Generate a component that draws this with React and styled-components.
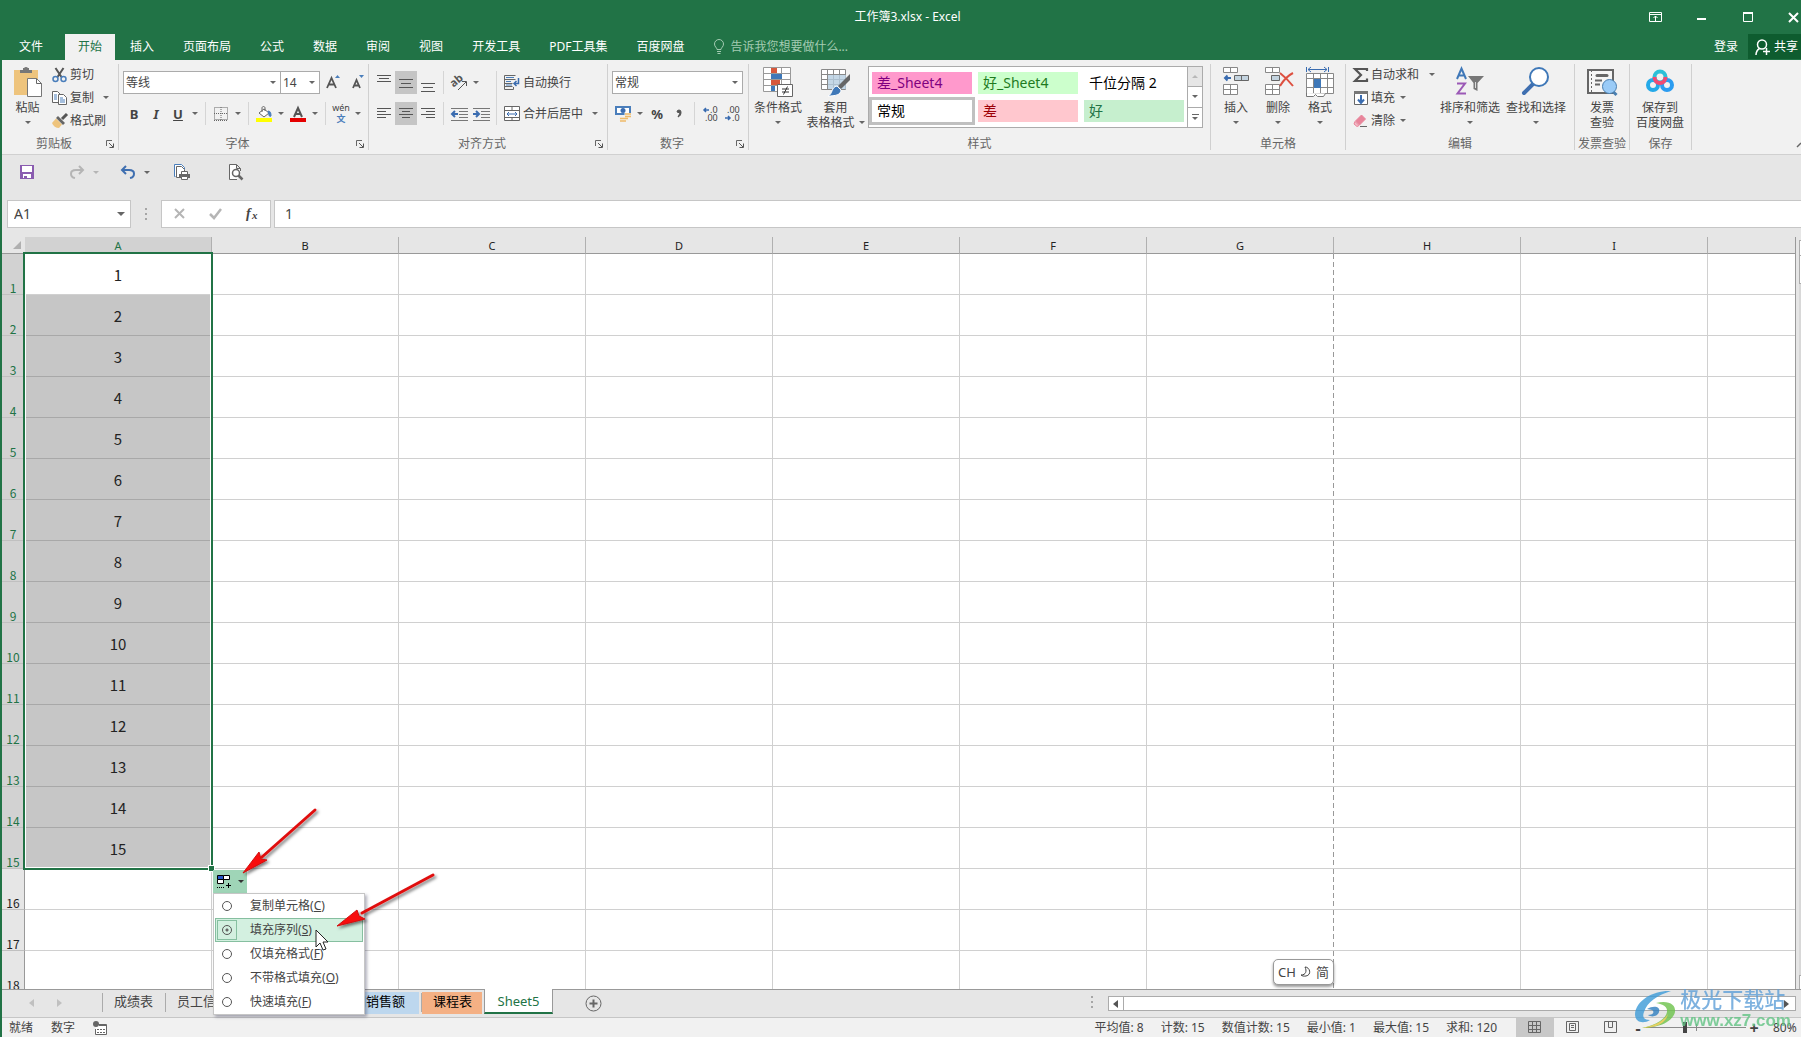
import React, { useState } from 'react'
import styled, { createGlobalStyle, css } from 'styled-components'

const GlobalStyle = createGlobalStyle`
    * { box-sizing: border-box; }
    body { margin: 0; overflow: hidden; }
    body, button, input, select {
        font-family: "Noto Sans", "Noto Sans CJK SC", sans-serif;
        font-size: 12px;
        line-height: 16px;
        color: #444;
    }
    button, input, select { border: 0; padding: 0; margin: 0; background: none; outline: none; }
    svg { display: block; flex: none; overflow: visible; }
`;

const AppFrame = styled.div`
    display: flex;
    flex-direction: column;
    height: 100vh;
    border-left: 2px solid #217346;
    background: #e6e6e6;
    overflow: hidden;
`;

/* ---------- title bar and tabs ---------- */

const TitleBar = styled.header`
    display: flex;
    align-items: center;
    height: 34px;
    background: #217346;
    color: #fff;
`;

const TitleText = styled.h1`
    flex: 1;
    margin: 0;
    padding-left: 164px;
    font-size: 12px;
    font-weight: 400;
    line-height: 34px;
    text-align: center;
`;

const WindowButtons = styled.div`
    display: flex;
    gap: 32px;
    width: 152px;
`;

const WindowButton = styled.button`
    width: 14px;
    height: 14px;
`;

const TabBar = styled.nav`
    display: flex;
    gap: 1px;
    height: 26px;
    background: #217346;
`;

const RibbonTab = styled.button`
    padding: 0 ${p => (p.$active ? 13 : 14)}px;
    line-height: 24px;
    white-space: nowrap;
    background: ${p => (p.$active ? '#f1f1f1' : 'transparent')};
    color: ${p => (p.$active ? '#217346' : '#fff')};
`;

const FileTab = styled(RibbonTab)`
    padding: 0 21px 0 17px;
`;

const TellMe = styled.label`
    display: flex;
    align-items: center;
    gap: 5px;
    flex: 1;
    padding-left: 14px;
    input {
        width: 160px;
        color: #a3cbb2;
    }
    input::placeholder { color: #a3cbb2; opacity: 1; }
`;

const SignIn = styled.button`
    padding: 0 9px;
    line-height: 24px;
    color: #fff;
`;

const ShareButton = styled.button`
    display: flex;
    align-items: center;
    gap: 4px;
    width: 53px;
    height: 25px;
    padding-left: 7px;
    background: #0e5c2f;
    color: #fff;
    white-space: nowrap;
    overflow: hidden;
`;

/* ---------- ribbon ---------- */

const Ribbon = styled.section`
    display: flex;
    flex: none;
    height: 95px;
    padding: 4px 0;
    background: #f1f1f1;
    border-bottom: 1px solid #d0d0d0;
`;

const Group = styled.div`
    display: flex;
    flex-direction: column;
    flex: none;
    width: ${p => p.$width}px;
    border-right: 1px solid #d0d0d0;
`;

const GroupBody = styled.div`
    display: flex;
    flex: 1;
    padding: 0 ${p => p.$pad || 4}px;
`;

const GroupFooter = styled.div`
    display: flex;
    align-items: center;
    height: 13px;
    line-height: 13px;
    color: #666;
    span { flex: 1; text-align: center; white-space: nowrap; }
`;

const Launcher = styled.button`
    width: 12px;
    height: 8px;
`;

const Caret = styled.i`
    flex: none;
    width: 0;
    height: 0;
    border: 3px solid transparent;
    border-top-color: ${p => p.$color || '#666'};
    border-bottom: 0;
`;

const Stack = styled.div`
    display: flex;
    flex-direction: column;
    gap: ${p => p.$gap || 8}px;
    padding-top: ${p => p.$top || 0}px;
`;

const Row = styled.div`
    display: flex;
    align-items: center;
    height: 23px;
`;

const ToolButton = styled.button`
    display: flex;
    flex: none;
    align-items: center;
    justify-content: center;
    width: ${p => p.$width || 22}px;
    height: 23px;
    background: ${p => (p.$on ? '#c5c5c5' : 'transparent')};
    ${p => p.$letter && css`
        font-size: 13px;
        font-weight: 700;
        font-style: ${p.$italic ? 'italic' : 'normal'};
        text-decoration: ${p.$underline ? 'underline' : 'none'};
    `}
`;

const Divider = styled.i`
    flex: none;
    width: 1px;
    height: ${p => p.$height || 23}px;
    margin: 0 ${p => p.$space || 4}px;
    background: #d5d5d5;
`;

const SmallButton = styled.button`
    display: flex;
    align-items: center;
    gap: ${p => p.$gap || 3}px;
    height: ${p => p.$height || 21}px;
    padding-left: 3px;
    white-space: nowrap;
    i { margin-left: ${p => p.$caretGap || 2}px; }
`;

const BigButton = styled.button`
    display: flex;
    flex-direction: column;
    align-items: center;
    flex: none;
    width: ${p => p.$width}px;
    padding-top: 3px;
    line-height: 15px;
    white-space: nowrap;
    svg { margin-bottom: 3px; }
    > i { margin-top: 6px; }
`;

const CaretLine = styled.span`
    display: flex;
    align-items: center;
    gap: 4px;
`;

const Combo = styled.label`
    display: flex;
    align-items: center;
    width: ${p => p.$width}px;
    height: 23px;
    margin-right: -1px;
    padding: 0 4px 0 2px;
    background: #fff;
    border: 1px solid #ababab;
    select {
        appearance: none;
        flex: 1;
        min-width: 0;
        line-height: 20px;
    }
`;

const Gallery = styled.div`
    display: flex;
    width: 335px;
    height: 62px;
    margin-top: 2px;
    background: #fff;
    border: 1px solid #ababab;
`;

const GalleryGrid = styled.div`
    display: grid;
    flex: 1;
    grid-template-columns: repeat(3, 100px);
    grid-auto-rows: 22px;
    gap: 6px;
    padding: 5px 3px;
`;

const StyleCell = styled.button`
    padding-left: 5px;
    text-align: left;
    font-size: 14px;
    line-height: 20px;
    background: ${p => p.$bg || '#fff'};
    color: ${p => p.$color || '#000'};
    box-shadow: ${p => (p.$selected ? '0 0 0 3px #c0c0c0' : 'none')};
`;

const GalleryScroll = styled.div`
    display: flex;
    flex-direction: column;
    width: 15px;
    border-left: 1px solid #ababab;
    button {
        display: flex;
        flex: 1;
        flex-direction: column;
        align-items: center;
        justify-content: center;
        gap: 2px;
    }
    button + button { border-top: 1px solid #ababab; }
    button:first-child { background: #e6e6e6; }
`;

const RibbonEnd = styled.div`
    display: flex;
    flex: 1;
    align-items: flex-end;
    justify-content: flex-end;
    overflow: hidden;
`;

/* ---------- quick access and formula bar ---------- */

const QuickAccess = styled.div`
    display: flex;
    align-items: center;
    flex: none;
    height: 34px;
    padding-left: 17px;
`;

const QuickButton = styled.button`
    display: flex;
    align-items: center;
    gap: 8px;
    width: ${p => p.$width}px;
`;

const FormulaBar = styled.div`
    display: flex;
    align-items: center;
    flex: none;
    height: 48px;
    padding: 2px 0 0 5px;
`;

const Field = styled.label`
    display: flex;
    align-items: center;
    height: 28px;
    padding: 0 5px 0 6px;
    background: #fff;
    border: 1px solid #c6c6c6;
    width: ${p => (p.$grow ? 'auto' : '124px')};
    flex: ${p => (p.$grow ? 1 : 'none')};
    ${p => p.$grow && css`
        margin-left: 3px;
        padding-left: 10px;
        border-right: 0;
    `}
    input {
        flex: 1;
        min-width: 0;
        font-size: 14px;
    }
    i {
        border-width: 4px;
        border-bottom: 0;
    }
`;

const Dots = styled.i`
    display: flex;
    flex-direction: column;
    align-items: center;
    gap: 3px;
    width: ${p => p.$width}px;
    &::before, &::after, & > b {
        content: '';
        width: 2px;
        height: 2px;
        background: #a6a6a6;
    }
`;

const EntryButtons = styled.div`
    display: flex;
    align-items: center;
    justify-content: space-around;
    width: 110px;
    height: 28px;
    background: #fff;
    border: 1px solid #c6c6c6;
`;

/* ---------- sheet ---------- */

const Workspace = styled.main`
    position: relative;
    display: flex;
    flex: 1;
    min-height: 0;
`;

const GridClip = styled.div`
    flex: 1;
    min-width: 0;
    overflow: hidden;
`;

const Grid = styled.table`
    width: 100%;
    table-layout: fixed;
    border-spacing: 0;
    border-right: 1px solid #999;
    th, td { padding: 0; font-weight: 400; }
`;

const CornerCell = styled.th`
    height: 17px;
    border-bottom: 1px solid #999;
    svg { margin-left: 11px; }
`;

const ColHead = styled.th`
    height: 17px;
    font-size: 11px;
    line-height: 14px;
    vertical-align: bottom;
    border-right: 1px solid #b0b0b0;
    border-bottom: 1px solid #999;
    background: ${p => (p.$selected ? '#d2d2d2' : '#e6e6e6')};
    color: ${p => (p.$selected ? '#217346' : '#222')};
    &:last-child { border-right: 0; }
`;

const RowHead = styled.th`
    height: 41px;
    font-family: "Noto Sans CJK SC", sans-serif;
    font-size: 12px;
    line-height: 13px;
    vertical-align: bottom;
    border-right: 1px solid #999;
    border-bottom: 1px solid #c0c0c0;
    background: ${p => (p.$selected ? '#d2d2d2' : '#e6e6e6')};
    color: ${p => (p.$selected ? '#217346' : '#222')};
`;

const Cell = styled.td`
    height: 41px;
    && { padding-top: 2px; }
    font-family: "Noto Sans CJK SC", sans-serif;
    font-size: 15px;
    line-height: 20px;
    text-align: center;
    vertical-align: middle;
    color: #222;
    background: ${p => (p.$filled ? '#c6c6c6' : '#fff')};
    border-right: 1px solid #d0d0d0;
    border-bottom: 1px solid ${p => (p.$filled ? '#a8a8a8' : '#d0d0d0')};
    ${p => p.$pageBreak && css`
        border-right: 0;
        background: repeating-linear-gradient(#999 0 5px, #fff 5px 8px) right / 1px 100% no-repeat #fff;
    `}
    &:last-child { border-right: 0; }
`;

const Selection = styled.div`
    position: absolute;
    left: 21px;
    top: 15px;
    width: 190px;
    height: 618px;
    border: 2px solid #217346;
    box-shadow: inset 0 0 0 1px #fff;
    &::after {
        content: '';
        position: absolute;
        right: -3px;
        bottom: -3px;
        width: 5px;
        height: 5px;
        background: #217346;
        outline: 1px solid #fff;
    }
`;

const SideScroll = styled.div`
    display: flex;
    flex-direction: column;
    width: 5px;
    padding: 3px 0 0 3px;
    i { border-left: 1px solid #ababab; border-top: 1px solid #ababab; background: #fff; }
    i:nth-child(1) { height: 15px; }
    i:nth-child(2) { height: 29px; border-bottom: 1px solid #ababab; }
    i:nth-child(3) { flex: 1; border: 0; background: #d8d8d8; }
    i:nth-child(4) { height: 14px; }
`;

const FillOptions = styled.div`
    position: absolute;
    z-index: 2;
    left: 211px;
    top: 633px;
`;

const FillButton = styled.button`
    display: flex;
    align-items: center;
    gap: 6px;
    width: 34px;
    height: 23px;
    padding-left: 4px;
    background: #9fd5b7;
`;

const Menu = styled.div`
    width: 152px;
    padding: 0 1px;
    background: #fff;
    border: 1px solid #c6c6c6;
    box-shadow: 2px 2px 3px rgba(60, 60, 90, 0.4);
`;

const MenuItem = styled.label`
    display: flex;
    align-items: center;
    gap: 13px;
    height: 24px;
    border: 1px solid ${p => (p.$active ? '#86bfa0' : 'transparent')};
    background: ${p => (p.$active ? '#d3f0e0' : 'transparent')};
    white-space: nowrap;
`;

const RadioBox = styled.span`
    display: flex;
    align-items: center;
    justify-content: center;
    width: 20px;
    height: 20px;
    margin-left: 1px;
    border: 1px solid ${p => (p.$active ? '#86bfa0' : 'transparent')};
    input {
        appearance: none;
        width: 10px;
        height: 10px;
        border: 1px solid #555;
        border-radius: 50%;
        background: ${p => (p.$active ? 'radial-gradient(#666 1px, transparent 2px)' : '#fff')};
    }
`;

const Annotations = styled.svg`
    position: absolute;
    z-index: 3;
    left: 210px;
    top: 563px;
    pointer-events: none;
`;

const ImeBadge = styled.div`
    position: absolute;
    right: 467px;
    bottom: 4px;
    display: flex;
    align-items: center;
    justify-content: center;
    gap: 4px;
    width: 61px;
    height: 26px;
    background: #fff;
    border: 1px solid #999;
    border-radius: 5px;
    box-shadow: 0 2px 3px rgba(0, 0, 0, 0.4);
    font-size: 13px;
`;

/* ---------- sheet tabs and status bar ---------- */

const SheetBar = styled.div`
    display: flex;
    flex: none;
    height: 28px;
    border-top: 1px solid #999;
`;

const SheetNav = styled.div`
    display: flex;
    align-items: center;
    gap: 23px;
    width: 100px;
    height: 26px;
    padding-left: 27px;
`;

const SheetTab = styled.button`
    flex: none;
    width: ${p => p.$width}px;
    height: 22px;
    margin: 2px 2px 0 0;
    padding: 0 0 4px 11px;
    text-align: left;
    font-size: 13px;
    line-height: 18px;
    white-space: nowrap;
    background: ${p => p.$bg || 'transparent'};
    color: ${p => (p.$bg ? '#000' : '#444')};
    ${p => p.$active && css`
        height: 25px;
        margin: -1px 0 0;
        padding: 1px 0 0;
        text-align: center;
        background: #fff;
        color: #217346;
        border: 1px solid #999;
        border-top: 0;
        border-bottom: 2px solid #217346;
    `}
`;

const TabDivider = styled.i`
    width: 1px;
    height: 19px;
    margin-top: 3px;
    background: #ababab;
`;

const AddSheet = styled.button`
    width: 17px;
    height: 26px;
    margin-left: 32px;
`;

const SheetSpacer = styled.div`
    flex: 1;
`;

const HScroll = styled.div`
    display: flex;
    align-items: center;
    justify-content: space-between;
    width: 688px;
    height: 15px;
    margin: 6px 5px 0 0;
    background: #fff;
    border: 1px solid #ababab;
    button {
        width: 15px;
        height: 13px;
        padding-left: 4px;
        border-right: 1px solid #ababab;
    }
    button:last-child { border: 0; }
`;

const StatusBar = styled.footer`
    display: flex;
    align-items: center;
    flex: none;
    height: 20px;
    padding-left: 7px;
    background: #f1f1f1;
    border-top: 1px solid #c6c6c6;
    white-space: nowrap;
`;

const StatusLeft = styled.div`
    display: flex;
    align-items: center;
    gap: 18px;
    flex: 1;
`;

const StatusSums = styled.div`
    display: flex;
    gap: 17px;
    padding-right: 19px;
`;

const ViewButton = styled.button`
    display: flex;
    align-items: center;
    justify-content: center;
    width: 38px;
    height: 19px;
    background: ${p => (p.$on ? '#c8c8c8' : 'transparent')};
`;

const ZoomControl = styled.div`
    display: flex;
    align-items: center;
    width: 171px;
    padding-left: 3px;
    button { width: 10px; font-size: 16px; font-weight: 700; line-height: 16px; }
    label { padding-left: 14px; }
`;

const ZoomSlider = styled.input`
    appearance: none;
    width: 100px;
    height: 16px;
    margin: 0 3px;
    background: linear-gradient(#8a8a8a, #8a8a8a) center / 100% 1px no-repeat,
        linear-gradient(#8a8a8a, #8a8a8a) center / 1px 7px no-repeat;
    &::-webkit-slider-thumb {
        appearance: none;
        width: 4px;
        height: 11px;
        background: #444;
    }
`;

const Watermark = styled.div`
    position: fixed;
    z-index: 4;
    right: 10px;
    bottom: 5px;
    display: flex;
    align-items: center;
    gap: 4px;
    pointer-events: none;
    opacity: 0.8;
`;

const WatermarkText = styled.div`
    display: flex;
    flex-direction: column;
    font-size: 21px;
    line-height: 22px;
    font-weight: 500;
    color: #5e9fd8;
    b {
        font-family: "Liberation Sans", sans-serif;
        font-size: 17px;
        line-height: 22px;
        font-weight: 700;
        color: #62c384;
    }
`;

/* ---------- icons ---------- */

const Icon = ({ w = 16, h = 16, children, ...rest }) => (
    <svg width={w} height={h} viewBox={`0 0 ${w} ${h}`} fill="none" stroke="#666" {...rest}>
        {children}
    </svg>
)

const PasteIcon = () => (
    <Icon w={28} h={30}>
        <path d="M0 3h24v25H0z" fill="#eec47d" stroke="none" />
        <path d="M6 6h12V3h-3V1h-1c-1-1.500-3-1.500-4 0H9v2H6z" fill="#777" stroke="none" />
        <path d="M13.500 11.500h9l5 5v13h-14z" fill="#fff" stroke="#777" />
        <path d="M22.500 11.500v5h5" />
    </Icon>
)

const ScissorsIcon = () => (
    <Icon w={15}>
        <path d="M3.500 1l6 9M11.500 1l-6 9" stroke="#555" strokeWidth="2" />
        <circle cx="3.500" cy="12" r="2.500" stroke="#4a7ebb" strokeWidth="1.500" />
        <circle cx="11.500" cy="12" r="2.500" stroke="#4a7ebb" strokeWidth="1.500" />
    </Icon>
)

const CopyIcon = () => (
    <Icon w={15}>
        <path d="M.5 1.500h5l3 3v8h-8z" fill="#fff" />
        <path d="M2 5h3M2 7h3M2 9h3" stroke="#4a7ebb" />
        <path d="M6.500 4.500h5l3 3v7h-8z" fill="#fff" />
        <path d="M8 8h3M8 10h5M8 12h5" stroke="#4a7ebb" />
    </Icon>
)

const BrushIcon = () => (
    <Icon w={15}>
        <path d="M15 1l-5 5" stroke="#555" strokeWidth="3" />
        <path d="M6 3l7 7-2 2-7-7z" fill="#666" stroke="none" />
        <path d="M4 5.500l6 6-3 3.500c-3 0-6-2-7-5z" fill="#eec47d" stroke="none" />
    </Icon>
)

const LauncherIcon = () => (
    <Icon w={8} h={8}>
        <path d="M.5 6V.5H6" />
        <path d="M3 3l4 4M7.500 3.500v4h-4" stroke="#555" />
    </Icon>
)

const GrowFontIcon = ({ down }) => (
    <Icon w={15} h={18}>
        <path
            d={down ? 'M2 14L5.500 6 9 14M3 11.500h5' : 'M1 14L5.500 4 10 14M2.500 10.500h6'}
            stroke="#555"
            strokeWidth="1.800"
        />
        <path d={down ? 'M8 1h5l-2.500 3z' : 'M9 4h5l-2.500-3z'} fill="#4a7ebb" stroke="none" />
    </Icon>
)

const BordersIcon = () => (
    <Icon w={14} h={14}>
        <path d="M.5.5h13v12H.5zM7 0v13M0 6.500h14" strokeDasharray="1 1" />
        <path d="M0 13.500h14" strokeDasharray="1 1" />
    </Icon>
)

const FillColorIcon = () => (
    <Icon>
        <path d="M3 7l5-4 5 4-5 4z" fill="#fff" />
        <path d="M6 6V2c0-2 3-2 3 0v3" />
        <path d="M12 5c3 0 3 3 3 5-1 1-2 0-2-1z" fill="#4a7ebb" stroke="#4a7ebb" />
        <path d="M0 12h16v4H0z" fill="#ff0" stroke="none" />
    </Icon>
)

const FontColorIcon = () => (
    <Icon>
        <path d="M4 11L8 2l4 9M5 8h6" stroke="#555" strokeWidth="2" />
        <path d="M0 12h16v4H0z" fill="#e50000" stroke="none" />
    </Icon>
)

const Phonetic = styled.span`
    display: flex;
    flex-direction: column;
    font-size: 9px;
    line-height: 10px;
    b { font-size: 9px; line-height: 12px; color: #4a7ebb; }
`;

// lines are [x, width] pairs drawn every three pixels
const LinesIcon = ({ lines, top, step = 4 }) => (
    <Icon w={14} h={20}>
        {lines.map(([x, w], i) => (
            <path key={i} d={`M${x} ${top + i * step + 0.5}h${w}`} stroke="#555" />
        ))}
    </Icon>
)

const IndentIcon = ({ out }) => (
    <Icon w={17} h={14}>
        <path d="M0 1.500h17M8 4.500h9M8 7.500h9M8 10.500h9M0 13.500h17" stroke="#777" />
        <path
            d={out ? 'M7 7H2M4 4L1 7l3 3' : 'M0 7h5M3 4l3 3-3 3'}
            stroke="#3a6cb0"
            strokeWidth="2"
        />
    </Icon>
)

const AngleIcon = () => (
    <Icon w={17}>
        <text x="0" y="10" fontSize="11" fontWeight="700" fill="#555" stroke="none" transform="rotate(-40 5 8)">ab</text>
        <path d="M7 15l8-8M11 6.500h4.500v4.500" stroke="#555" />
    </Icon>
)

const WrapIcon = () => (
    <Icon>
        <path d="M.5.5h11M.5 4.500h11M.5.5v14M9.500 12v2.500h-9M.5 8.500h8M.5 11.500h8" />
        <path d="M2 2.500h8M2 6.500h5M2 10h6" stroke="#4a7ebb" />
        <path d="M14.500 3v5.500h-4M12.500 6l-2.500 2.500 2.500 2.500" stroke="#3a6cb0" strokeWidth="1.500" />
    </Icon>
)

const MergeIcon = () => (
    <Icon>
        <path d="M.5.5h15v14H.5zM.5 4.500h15M.5 11.500h15M8 .5v4M8 11.500v3" fill="#fff" />
        <path d="M3 8h10M5 6L3 8l2 2M11 6l2 2-2 2" stroke="#3a6cb0" />
    </Icon>
)

const CurrencyIcon = () => (
    <Icon>
        <path d="M0 0h16v9H0z" fill="#4a7ebb" stroke="none" />
        <path d="M2 2h12v5H2z" fill="#fff" stroke="none" />
        <circle cx="8" cy="4.500" r="2.500" fill="#3a6cb0" stroke="none" />
        <path d="M9.500 7h6.500v4h-2v4H4.500v-4h5z" fill="#f4f0e6" stroke="none" />
        <path d="M10 8h6M10 10.500h6M5 12.500h8M5 15h6" stroke="#eeb96a" strokeWidth="1.500" />
    </Icon>
)

const DecimalIcon = ({ more }) => (
    <Icon w={17} h={16} fill="#444">
        <text x={more ? 8 : 3} y="7" fontSize="9" stroke="none">{more ? '.0' : '.00'}</text>
        <text x={more ? 3 : 8} y="15" fontSize="9" stroke="none">{more ? '.00' : '.0'}</text>
        <path d={more ? 'M7 4H2M4 2L2 4l2 2' : 'M1 12h5M4 10l2 2-2 2'} stroke="#3a6cb0" strokeWidth="1.500" />
    </Icon>
)

const ConditionalIcon = () => (
    <Icon w={30} h={30}>
        <path d="M.5.5h27v24H.5zM.5 6.500h27M.5 12.500h27M.5 18.500h27M8.500.5v24M18.500.5v24" fill="#fff" stroke="#999" />
        <path d="M8 1h6v5H8zM8 13h9v5H8z" fill="#d6583c" stroke="none" />
        <path d="M8 7h11v5H8zM8 19h4v5H8z" fill="#3f78b8" stroke="none" />
        <path d="M14.500 17.500h15v12h-15z" fill="#fff" />
        <path d="M19 22h7M19 25h7M24.500 19.500l-4 8" stroke="#333" />
    </Icon>
)

const TableFormatIcon = () => (
    <Icon w={30} h={30}>
        <path d="M.5 2.500h24v20H.5zM.5 7.500h24M.5 12.500h24M.5 17.500h24M6.500 2.500v20M12.500 2.500v20M18.500 2.500v20" fill="#fff" stroke="#888" />
        <path d="M7 8h18v14H7z" fill="#b5cde0" fillOpacity=".8" stroke="none" />
        <path d="M29 7v6l-9 9-3-3z" fill="#666" stroke="none" />
        <path d="M16 19l4 4c0 5-6 6-13 6 5-2 3-9 9-10z" fill="#3f78b8" stroke="#fff" />
    </Icon>
)

const CellsIcon = ({ kind }) => (
    <Icon w={26} h={30}>
        <path d="M.5.5h14v5H.5zM7.500.5v5M.5 17.500h14v10H.5zM7.500 17.500v10M.5 22.500h14" fill="#fff" stroke="#888" />
        {kind === 'insert' ? (
            <>
                <path d="M11.500 8.500h14v5h-14zM18.500 8.500v5" fill="#c3d3df" />
                <path d="M8 11H2M4.500 8.500L2 11l2.500 2.500" stroke="#3a6cb0" strokeWidth="2" />
            </>
        ) : (
            <>
                <path d="M6.500 8.500h8v5h-8z" fill="#c3d3df" />
                <path d="M15 6c5 4 9 8 13 13M28 6c-6 3-10 8-13 13" stroke="#dd5040" strokeWidth="2" />
            </>
        )}
    </Icon>
)

const CellFormatIcon = () => (
    <Icon w={30} h={30}>
        <path d="M1.500 0v5M23.500 0v5M3 2.500h19M6 0L3 2.500 6 5M19 0l3 2.500L19 5" stroke="#3a6cb0" />
        <path d="M1.500 6.500h27v20H1.500zM1.500 11.500h27M1.500 20.500h27M8.500 6.500v20M15.500 6.500v20M22.500 6.500v20" fill="#fff" stroke="#888" />
        <path d="M9 12h7v9H9z" fill="#3f78b8" stroke="none" />
        <path d="M1.500 26v3.500h7l2-2 2 2h6l2-3" fill="#fff" stroke="#777" />
    </Icon>
)

const SumIcon = () => (
    <Icon w={15}>
        <path d="M14 4V2H2l6 6-6 6h12v-2.500" stroke="#555" strokeWidth="2.200" />
    </Icon>
)

const FillDownIcon = () => (
    <Icon w={15}>
        <path d="M1.500 1.500h13v13h-13z" fill="#fff" />
        <path d="M1 1h14v3H1z" fill="#777" stroke="none" />
        <path d="M8 5v8M5 9.500L8 13l3-3.500" stroke="#3a6cb0" strokeWidth="2" />
    </Icon>
)

const EraserIcon = () => (
    <Icon w={15}>
        <path d="M8.500 2l4 4-6 6-4-4z" fill="#e8849a" stroke="#e8849a" strokeLinejoin="round" />
        <path d="M2 8.500L6 12.500l-2 1L1 11z" fill="#f4bcc8" stroke="#e8849a" />
        <path d="M7 13.500h7" />
    </Icon>
)

const SortIcon = () => (
    <Icon w={30} h={30}>
        <path d="M2 12L6.500 1.500 11 12M3.500 8.500h6" stroke="#3f78b8" strokeWidth="2" />
        <path d="M2 16.500h8L2.500 26.500h8.500" stroke="#9b59b6" strokeWidth="2" />
        <path d="M13 9h16l-6.500 7v8l-4-2v-6z" fill="#777" stroke="none" />
        <path d="M20.500 15v6" stroke="#ddd" />
    </Icon>
)

const FindIcon = () => (
    <Icon w={30} h={30}>
        <path d="M3 26l10-10" stroke="#3f6fb0" strokeWidth="4" strokeLinecap="round" />
        <circle cx="18" cy="10" r="9" fill="#fff" stroke="#3f78b8" strokeWidth="2" />
    </Icon>
)

const InvoiceIcon = () => (
    <Icon w={30} h={30}>
        <path d="M1 3h25v23H1z" fill="#f5f5f5" strokeWidth="2" />
        <path d="M4.500 3v23" strokeDasharray="2 2" />
        <path d="M10 8.500h10" strokeWidth="3" strokeLinecap="round" />
        <path d="M8 13.500h7M8 17.500h5" strokeWidth="2" />
        <circle cx="22.500" cy="19.500" r="7" fill="#9acbf7" stroke="#4a7fb0" />
        <path d="M26.500 25l3 3" stroke="#4a7fb0" strokeWidth="3" />
    </Icon>
)

const NetdiskIcon = () => (
    <Icon w={30} h={30}>
        <circle cx="8" cy="18" r="5" stroke="#24a9e8" strokeWidth="4" />
        <circle cx="22" cy="18" r="5" stroke="#2b9cf0" strokeWidth="4" />
        <circle cx="15" cy="10" r="5.500" stroke="#2cc0d8" strokeWidth="4" />
        <path d="M9.500 10c0 8 11 8 11 0" stroke="#ef4b73" strokeWidth="4" />
    </Icon>
)

/* ---------- data ---------- */

const TABS = ['插入', '页面布局', '公式', '数据', '审阅', '视图', '开发工具', 'PDF工具集', '百度网盘']

const CELL_STYLES = [
    { name: '差_Sheet4', bg: '#ff99cc', color: '#800080' },
    { name: '好_Sheet4', bg: '#ccffcc', color: '#1e7b1e' },
    { name: '千位分隔 2' },
    { name: '常规', selected: true },
    { name: '差', bg: '#ffc7ce', color: '#9c0006' },
    { name: '好', bg: '#c6efce', color: '#217346' },
]

const COLUMNS = ['A', 'B', 'C', 'D', 'E', 'F', 'G', 'H', 'I', '']
const ROWS = Array.from({ length: 18 }, (_, i) => i + 1)
const LAST_FILLED = 15

const FILL_CHOICES = [
    { label: '复制单元格', keyName: 'C' },
    { label: '填充序列', keyName: 'S' },
    { label: '仅填充格式', keyName: 'F' },
    { label: '不带格式填充', keyName: 'O' },
    { label: '快速填充', keyName: 'F' },
]

const SUMS = ['平均值: 8', '计数: 15', '数值计数: 15', '最小值: 1', '最大值: 15', '求和: 120']

const FULL = [0, 14]

/* ---------- components ---------- */

function RibbonGroup({ label, width, pad, launcher, children }) {
    return (
        <Group $width={width}>
            <GroupBody $pad={pad}>{children}</GroupBody>
            <GroupFooter>
                <span>{label}</span>
                {launcher && <Launcher aria-label={`${label}设置`}><LauncherIcon /></Launcher>}
            </GroupFooter>
        </Group>
    )
}

function Header() {
    return (
        <>
            <TitleBar>
                <TitleText>工作簿3.xlsx - Excel</TitleText>
                <WindowButtons>
                    <WindowButton aria-label="功能区显示选项">
                        <Icon w={14} h={14} stroke="#fff">
                            <path d="M.5 2.500h12v9H.5zM.5 4.500h12M6.500 11V6M4.500 8l2-2 2 2" />
                        </Icon>
                    </WindowButton>
                    <WindowButton aria-label="最小化">
                        <Icon w={14} h={14} stroke="#fff"><path d="M2 9h9" strokeWidth="2" /></Icon>
                    </WindowButton>
                    <WindowButton aria-label="最大化">
                        <Icon w={14} h={14} stroke="#fff">
                            <path d="M2.500 2.500h9v9h-9z" /><path d="M2 3h10" strokeWidth="2" />
                        </Icon>
                    </WindowButton>
                    <WindowButton aria-label="关闭">
                        <Icon w={14} h={14} stroke="#fff"><path d="M2 3l9 9M11 3l-9 9" strokeWidth="2" /></Icon>
                    </WindowButton>
                </WindowButtons>
            </TitleBar>
            <TabBar>
                <FileTab>文件</FileTab>
                <RibbonTab $active>开始</RibbonTab>
                {TABS.map(tab => <RibbonTab key={tab}>{tab}</RibbonTab>)}
                <TellMe>
                    <Icon w={12} h={16} stroke="#a3cbb2">
                        <path d="M4 10.500C4 8.500 1.500 8 1.500 5a4.500 4.500 0 0 1 9 0c0 3-2.500 3.500-2.500 5.500zM4 12.500h4M4.500 14.500h3" />
                    </Icon>
                    <input aria-label="告诉我" placeholder="告诉我您想要做什么..." />
                </TellMe>
                <SignIn>登录</SignIn>
                <ShareButton>
                    <Icon w={15} stroke="#fff" strokeWidth="1.500">
                        <circle cx="7" cy="5.500" r="4.500" />
                        <path d="M1 16c0-3 1-5 3.500-6.500M8 12.500h7M11.500 9v7" />
                    </Icon>
                    共享
                </ShareButton>
            </TabBar>
        </>
    )
}

function HomeRibbon() {
    return (
        <Ribbon>
            <RibbonGroup label="剪贴板" width={117} launcher>
                <BigButton $width={43}><PasteIcon />粘贴<Caret /></BigButton>
                <Stack $gap={2}>
                    <SmallButton><ScissorsIcon />剪切</SmallButton>
                    <SmallButton $caretGap={6}><CopyIcon />复制<Caret /></SmallButton>
                    <SmallButton><BrushIcon />格式刷</SmallButton>
                </Stack>
            </RibbonGroup>

            <RibbonGroup label="字体" width={250} launcher>
                <Stack $top={7}>
                    <Row>
                        <Combo $width={158}>
                            <select aria-label="字体"><option>等线</option></select><Caret />
                        </Combo>
                        <Combo $width={40}>
                            <select aria-label="字号"><option>14</option></select><Caret />
                        </Combo>
                        <ToolButton $width={28} aria-label="增大字号"><GrowFontIcon /></ToolButton>
                        <ToolButton aria-label="减小字号"><GrowFontIcon down /></ToolButton>
                    </Row>
                    <Row>
                        <ToolButton $letter>B</ToolButton>
                        <ToolButton $letter $italic>I</ToolButton>
                        <ToolButton $letter $underline>U</ToolButton>
                        <ToolButton $width={12} aria-label="下划线选项"><Caret /></ToolButton>
                        <Divider />
                        <ToolButton aria-label="边框"><BordersIcon /></ToolButton>
                        <ToolButton $width={12} aria-label="边框选项"><Caret /></ToolButton>
                        <Divider />
                        <ToolButton aria-label="填充颜色"><FillColorIcon /></ToolButton>
                        <ToolButton $width={12} aria-label="填充颜色选项"><Caret /></ToolButton>
                        <ToolButton aria-label="字体颜色"><FontColorIcon /></ToolButton>
                        <ToolButton $width={12} aria-label="字体颜色选项"><Caret /></ToolButton>
                        <Divider />
                        <ToolButton aria-label="拼音"><Phonetic>wén<b>文</b></Phonetic></ToolButton>
                        <ToolButton $width={12} aria-label="拼音选项"><Caret /></ToolButton>
                    </Row>
                </Stack>
            </RibbonGroup>

            <RibbonGroup label="对齐方式" width={239} launcher>
                <Stack $top={7}>
                    <Row>
                        <ToolButton aria-label="顶端对齐"><LinesIcon top={2} lines={[FULL, [2, 10], FULL]} step={3} /></ToolButton>
                        <ToolButton $on aria-label="垂直居中"><LinesIcon top={6} lines={[FULL, [2, 10], FULL]} /></ToolButton>
                        <ToolButton aria-label="底端对齐"><LinesIcon top={10} lines={[FULL, [2, 10], FULL]} /></ToolButton>
                        <Divider />
                        <ToolButton aria-label="方向"><AngleIcon /></ToolButton>
                        <ToolButton $width={12} aria-label="方向选项"><Caret /></ToolButton>
                    </Row>
                    <Row>
                        <ToolButton aria-label="左对齐"><LinesIcon top={4} lines={[FULL, [0, 9], FULL, [0, 9]]} step={3} /></ToolButton>
                        <ToolButton $on aria-label="居中"><LinesIcon top={4} lines={[FULL, [3, 8], FULL, [3, 8]]} step={3} /></ToolButton>
                        <ToolButton aria-label="右对齐"><LinesIcon top={4} lines={[FULL, [5, 9], FULL, [5, 9]]} step={3} /></ToolButton>
                        <Divider />
                        <ToolButton aria-label="减少缩进量"><IndentIcon out /></ToolButton>
                        <ToolButton aria-label="增加缩进量"><IndentIcon /></ToolButton>
                    </Row>
                </Stack>
                <Stack $top={7}><Divider $height={54} /></Stack>
                <Stack $top={7}>
                    <SmallButton $height={23}><WrapIcon />自动换行</SmallButton>
                    <SmallButton $height={23} $caretGap={6}><MergeIcon />合并后居中<Caret /></SmallButton>
                </Stack>
            </RibbonGroup>

            <RibbonGroup label="数字" width={141} launcher>
                <Stack $top={7}>
                    <Row>
                        <Combo $width={131}>
                            <select aria-label="数字格式"><option>常规</option></select><Caret />
                        </Combo>
                    </Row>
                    <Row>
                        <ToolButton aria-label="会计数字格式"><CurrencyIcon /></ToolButton>
                        <ToolButton $width={12} aria-label="会计选项"><Caret /></ToolButton>
                        <ToolButton $letter>%</ToolButton>
                        <ToolButton aria-label="千位分隔样式">
                            <Icon w={6} h={10}><path d="M1 3a2 2 0 1 1 4 0c0 3-1 4-3 5l2-4z" fill="#555" stroke="#555" /></Icon>
                        </ToolButton>
                        <Divider />
                        <ToolButton aria-label="增加小数位数"><DecimalIcon more /></ToolButton>
                        <ToolButton aria-label="减少小数位数"><DecimalIcon /></ToolButton>
                    </Row>
                </Stack>
            </RibbonGroup>

            <RibbonGroup label="样式" width={462}>
                <BigButton $width={50}><ConditionalIcon />条件格式<Caret /></BigButton>
                <BigButton $width={65}>
                    <TableFormatIcon />
                    套用
                    <CaretLine>表格格式<Caret /></CaretLine>
                </BigButton>
                <Gallery>
                    <GalleryGrid>
                        {CELL_STYLES.map(s => (
                            <StyleCell key={s.name} $bg={s.bg} $color={s.color} $selected={s.selected}>{s.name}</StyleCell>
                        ))}
                    </GalleryGrid>
                    <GalleryScroll>
                        <button aria-label="上一行"><Icon w={6} h={3}><path d="M0 3h6L3 0z" fill="#b8b8b8" stroke="none" /></Icon></button>
                        <button aria-label="下一行"><Caret /></button>
                        <button aria-label="其他">
                            <Icon w={7} h={1}><path d="M0 .5h7" /></Icon>
                            <Caret />
                        </button>
                    </GalleryScroll>
                </Gallery>
            </RibbonGroup>

            <RibbonGroup label="单元格" width={135}>
                <BigButton $width={42}><CellsIcon kind="insert" />插入<Caret /></BigButton>
                <BigButton $width={42}><CellsIcon kind="delete" />删除<Caret /></BigButton>
                <BigButton $width={42}><CellFormatIcon />格式<Caret /></BigButton>
            </RibbonGroup>

            <RibbonGroup label="编辑" width={229}>
                <Stack $gap={2}>
                    <SmallButton $caretGap={7}><SumIcon />自动求和<Caret /></SmallButton>
                    <SmallButton><FillDownIcon />填充<Caret /></SmallButton>
                    <SmallButton><EraserIcon />清除<Caret /></SmallButton>
                </Stack>
                <BigButton $width={70}><SortIcon />排序和筛选<Caret /></BigButton>
                <BigButton $width={62}><FindIcon />查找和选择<Caret /></BigButton>
            </RibbonGroup>

            <RibbonGroup label="发票查验" width={55}>
                <BigButton $width={46}><InvoiceIcon />发票<span>查验</span></BigButton>
            </RibbonGroup>

            <RibbonGroup label="保存" width={62}>
                <BigButton $width={52}><NetdiskIcon />保存到<span>百度网盘</span></BigButton>
            </RibbonGroup>

            <RibbonEnd>
                <Icon w={4} h={8}><path d="M0 5l4-4" strokeWidth="1.500" /></Icon>
            </RibbonEnd>
        </Ribbon>
    )
}

function Bars() {
    return (
        <>
            <QuickAccess>
                <QuickButton $width={50} aria-label="保存">
                    <Icon w={16}>
                        <path d="M1 1h14v14H1z" fill="#8a5cb0" stroke="none" />
                        <path d="M3 2h10v6H3zM4 10h8v4H4z" fill="#fff" stroke="none" />
                        <path d="M5 12h3v3H5z" fill="#8a5cb0" stroke="none" />
                    </Icon>
                </QuickButton>
                <QuickButton $width={51} aria-label="恢复">
                    <Icon w={16} stroke="#b5b5b5" strokeWidth="2">
                        <path d="M14 6H7c-7 0-6 7-1 8M10 2l4 4-4 4" />
                    </Icon>
                    <Caret $color="#b5b5b5" />
                </QuickButton>
                <QuickButton $width={53} aria-label="撤消">
                    <Icon w={16} stroke="#3f6fb0" strokeWidth="2">
                        <path d="M2 6h7c7 0 6 7 1 8M6 2L2 6l4 4" />
                    </Icon>
                    <Caret />
                </QuickButton>
                <QuickButton $width={55} aria-label="快速打印">
                    <Icon w={17} h={17}>
                        <path d="M2.500 12.500h-1v-12h7l3 3v2" fill="#fff" stroke="#4a7ebb" />
                        <path d="M3.500 2.500h5l3 3v8h-8z" fill="#fff" />
                        <path d="M8.500 7.500h6v3h-6z" fill="#fff" />
                        <path d="M6 10h11v4H6z" fill="#666" stroke="none" />
                        <path d="M8.500 12.500h6v3h-6z" fill="#fff" />
                    </Icon>
                </QuickButton>
                <QuickButton $width={20} aria-label="打印预览">
                    <Icon w={16} h={17}>
                        <path d="M9 15.500H1.500V.5h7l4 4V7M8.500.5v4h4" fill="#fff" />
                        <circle cx="8" cy="9" r="3.500" fill="#fff" strokeWidth="1.500" />
                        <path d="M10.500 11.500l4 4" strokeWidth="2.500" />
                    </Icon>
                </QuickButton>
            </QuickAccess>
            <FormulaBar>
                <Field>
                    <input aria-label="名称框" defaultValue="A1" />
                    <Caret />
                </Field>
                <Dots $width={30}><b /></Dots>
                <EntryButtons>
                    <button aria-label="取消"><Icon w={12} h={12} stroke="#b5b5b5" strokeWidth="2"><path d="M1 1l9 9M10 1l-9 9" /></Icon></button>
                    <button aria-label="输入"><Icon w={13} h={12} stroke="#b5b5b5" strokeWidth="2.500"><path d="M1 6l4 4 7-9" /></Icon></button>
                    <button aria-label="插入函数">
                        <Icon w={14} h={16} fill="#444">
                            <text x="1" y="12" fontSize="14" fontStyle="italic" fontWeight="700" fontFamily="Liberation Serif" stroke="none">f</text>
                            <text x="7" y="13" fontSize="11" fontStyle="italic" fontWeight="700" fontFamily="Liberation Serif" stroke="none">x</text>
                        </Icon>
                    </button>
                </EntryButtons>
                <Field $grow>
                    <input aria-label="编辑栏" defaultValue="1" />
                </Field>
            </FormulaBar>
        </>
    )
}

function FillMenu() {
    const [choice, setChoice] = useState(1)

    return (
        <FillOptions>
            <FillButton aria-label="自动填充选项">
                <Icon w={15} h={15} stroke="#000">
                    <path d="M.5 1.500h6v4h-6z" fill="#2858c8" />
                    <path d="M6.500 1.500h6v4h-6zM.5 5.500h6v4h-6z" fill="#fff" />
                    <path d="M0 13.500h8" strokeDasharray="1 1" />
                    <path d="M9 11.500h5M11.500 9v5" />
                </Icon>
                <Caret $color="#333" />
            </FillButton>
            <Menu>
                {FILL_CHOICES.map((item, i) => (
                    <MenuItem key={item.label} $active={i === choice}>
                        <RadioBox $active={i === choice}>
                            <input type="radio" name="fill" checked={i === choice} onChange={() => setChoice(i)} />
                        </RadioBox>
                        <span>{item.label}(<u>{item.keyName}</u>)</span>
                    </MenuItem>
                ))}
            </Menu>
        </FillOptions>
    )
}

function Sheet() {
    return (
        <Workspace>
            <GridClip>
                <Grid>
                    <colgroup>
                        <col width="23" />
                        {COLUMNS.map((c, i) => <col key={i} width={c ? 187 : undefined} />)}
                    </colgroup>
                    <thead>
                        <tr>
                            <CornerCell>
                                <Icon w={8} h={8}><path d="M8 0v8H0z" fill="#b0b0b0" stroke="none" /></Icon>
                            </CornerCell>
                            {COLUMNS.map((c, i) => <ColHead key={i} $selected={c === 'A'}>{c}</ColHead>)}
                        </tr>
                    </thead>
                    <tbody>
                        {ROWS.map(row => (
                            <tr key={row}>
                                <RowHead $selected={row <= LAST_FILLED}>{row}</RowHead>
                                {COLUMNS.map((c, i) => {
                                    const inRange = c === 'A' && row <= LAST_FILLED
                                    return (
                                        <Cell key={i} $filled={inRange && row > 1} $pageBreak={c === 'G'}>
                                            {inRange ? row : null}
                                        </Cell>
                                    )
                                })}
                            </tr>
                        ))}
                    </tbody>
                </Grid>
            </GridClip>
            <SideScroll><i /><i /><i /><i /></SideScroll>
            <Selection />
            <FillMenu />
            <ImeBadge>
                CH
                <Icon w={12} h={12} stroke="#444"><path d="M5 1c5 0 7 8 1 9-2 .4-4 0-5-1 5 0 6-4 4-8z" /></Icon>
                简
            </ImeBadge>
            <Annotations width="240" height="160" viewBox="0 0 240 160">
                <defs>
                    <filter id="drop" x="-20%" y="-20%" width="150%" height="150%">
                        <feDropShadow dx="2" dy="2" stdDeviation="1.500" floodColor="#000" floodOpacity="0.5" />
                    </filter>
                </defs>
                <g filter="url(#drop)" fill="#f80808" stroke="#d01010" strokeLinejoin="round">
                    <path d="M103 10L50 57" stroke="#e01010" strokeWidth="3" strokeLinecap="round" />
                    <path d="M31 73L47 52l2 7 6 1z" />
                    <path d="M221 75L150 113" stroke="#e01010" strokeWidth="3" strokeLinecap="round" />
                    <path d="M125 126l20-16 2 6 6 3z" />
                </g>
                <path d="M104 130v17l4-4 3 7 3-1-3-7h5z" fill="#fff" stroke="#222" />
            </Annotations>
        </Workspace>
    )
}

function Footer() {
    const [zoom, setZoom] = useState(80)

    return (
        <>
            <SheetBar>
                <SheetNav>
                    <Icon w={5} h={8}><path d="M5 0v8L0 4z" fill="#c0c0c0" stroke="none" /></Icon>
                    <Icon w={5} h={8}><path d="M0 0v8l5-4z" fill="#c0c0c0" stroke="none" /></Icon>
                </SheetNav>
                <TabDivider />
                <SheetTab $width={60}>成绩表</SheetTab>
                <TabDivider />
                <SheetTab $width={160}>员工信息表</SheetTab>
                <TabDivider />
                <SheetTab $width={90} $bg="#bdd7ee">部门销售额</SheetTab>
                <TabDivider />
                <SheetTab $width={60} $bg="#f4b084">课程表</SheetTab>
                <SheetTab $width={69} $active>Sheet5</SheetTab>
                <AddSheet aria-label="新工作表">
                    <Icon w={17} h={17}><circle cx="8.500" cy="8.500" r="7.500" /><path d="M8.500 4.500v8M4.500 8.500h8" strokeWidth="2" /></Icon>
                </AddSheet>
                <SheetSpacer />
                <Row><Dots $width={32}><b /></Dots></Row>
                <HScroll>
                    <button aria-label="向左滚动"><Icon w={5} h={8}><path d="M5 0v8L0 4z" fill="#555" stroke="none" /></Icon></button>
                    <button aria-label="向右滚动"><Icon w={5} h={8}><path d="M0 0v8l5-4z" fill="#555" stroke="none" /></Icon></button>
                </HScroll>
            </SheetBar>
            <StatusBar>
                <StatusLeft>
                    <span>就绪</span>
                    <span>数字</span>
                    <Icon w={14} h={14}>
                        <path d="M3.500 3.500h10v10h-11V8" fill="#fff" />
                        <path d="M6 3h7v2H6z" fill="#666" stroke="none" />
                        <path d="M4 8.500h8M4 11.500h8" strokeDasharray="2 1" />
                        <circle cx="3" cy="3" r="3" fill="#666" stroke="none" />
                    </Icon>
                </StatusLeft>
                <StatusSums>
                    {SUMS.map(text => <span key={text}>{text}</span>)}
                </StatusSums>
                <ViewButton $on aria-label="普通">
                    <Icon w={14} h={13}><path d="M.5.5h12v11H.5zM.5 4.500h12M.5 8.500h12M4.500.5v11M8.500.5v11" /></Icon>
                </ViewButton>
                <ViewButton aria-label="页面布局">
                    <Icon w={14} h={13}><path d="M.5.5h12v11H.5zM3.500 2.500h6v7h-6zM5 4.500h3M5 6.500h3" /></Icon>
                </ViewButton>
                <ViewButton aria-label="分页预览">
                    <Icon w={14} h={13}><path d="M.5.5h12v11H.5zM4.500.5v6h4M8.500.5v6" /></Icon>
                </ViewButton>
                <ZoomControl>
                    <button aria-label="缩小" onClick={() => setZoom(zoom - 10)}>-</button>
                    <ZoomSlider id="zoom" type="range" min="10" max="190" value={zoom} onChange={e => setZoom(Number(e.target.value))} />
                    <button aria-label="放大" onClick={() => setZoom(zoom + 10)}>+</button>
                    <label htmlFor="zoom">{zoom}%</label>
                </ZoomControl>
            </StatusBar>
        </>
    )
}

export default function App() {
    return (
        <AppFrame>
            <GlobalStyle />
            <Header />
            <HomeRibbon />
            <Bars />
            <Sheet />
            <Footer />
            <Watermark>
                <Icon w={42} h={40} stroke="none">
                    <path d="M37 1C20 0 2 10 1 24c0 9 9 10 15 6-6 0-8-3-6-8C13 12 24 5 37 1z" fill="#3b9ad8" />
                    <path d="M13 19c7-4 14-2 12 3-1 4-7 6-11 3 5 0 7-3 4-5z" fill="#2f7fc0" />
                    <path d="M22 13c12-3 20 1 19 9-2 9-15 16-33 16 14-3 24-9 25-16 1-5-4-8-11-9z" fill="#6cc24a" />
                    <path d="M8 38c12-2 22-7 26-14-2 9-12 14-26 14z" fill="#e9c63f" />
                </Icon>
                <WatermarkText>
                    极光下载站
                    <b>www.xz7.com</b>
                </WatermarkText>
            </Watermark>
        </AppFrame>
    )
}
